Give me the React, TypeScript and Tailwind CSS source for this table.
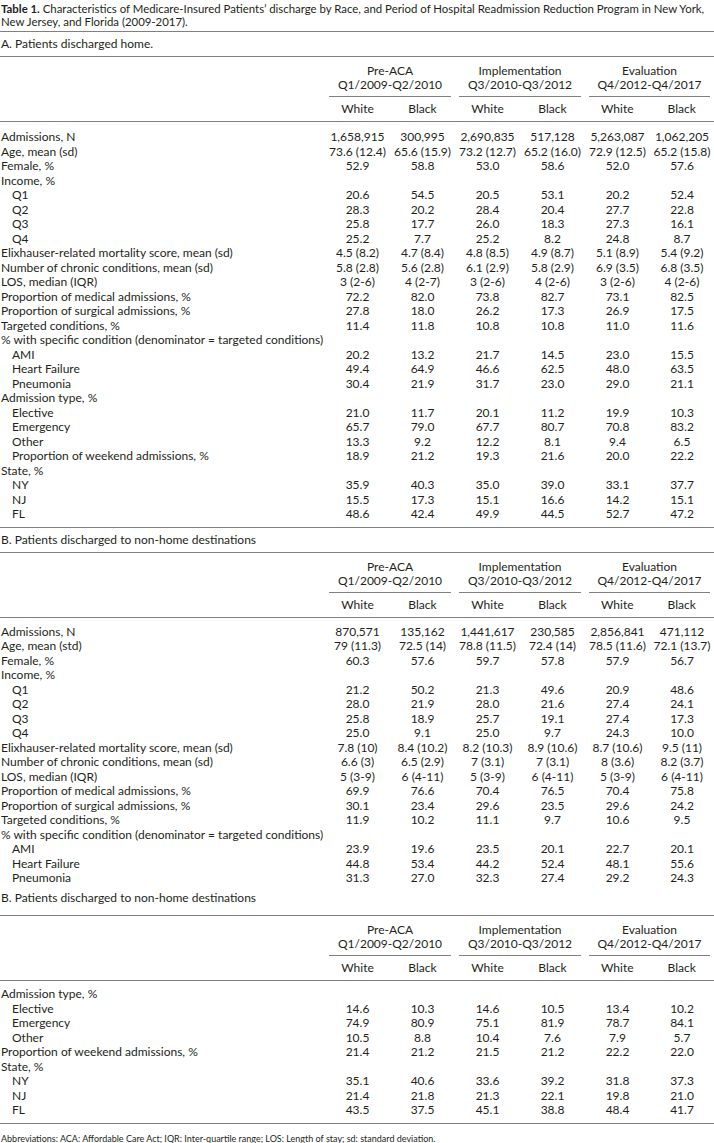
import React from "react";

type Row = { label: string; indent?: boolean; v?: string[] };

const COLS = "grid grid-cols-[325px_65px_65px_65px_65px_65px_64px]";

function Rule() {
  return <div className="h-px bg-[#808080]" />;
}

function Header() {
  const groups = [
    ["Pre-ACA", "Q1/2009-Q2/2010"],
    ["Implementation", "Q3/2010-Q3/2012"],
    ["Evaluation", "Q4/2012-Q4/2017"],
  ];
  return (
    <div className={`${COLS} pt-[7px] pb-[5px]`}>
      <div />
      {groups.map((g) => (
        <div key={g[0]} className="col-span-2 flex flex-col items-center">
          <div className="leading-[14px] text-center whitespace-nowrap">{g[0]}</div>
          <div className="leading-[14px] text-center whitespace-nowrap">{g[1]}</div>
          <div className="mt-[4px] h-px self-stretch mx-[4px] bg-[#808080]" />
          <div className="mt-[5px] self-stretch grid grid-cols-2 leading-[14px] text-center">
            <div>White</div>
            <div>Black</div>
          </div>
        </div>
      ))}
    </div>
  );
}

function Rows({ rows, className }: { rows: Row[]; className: string }) {
  return (
    <div className={className}>
      {rows.map((r, i) => (
        <div key={i} className={`${COLS} h-[14.5px] leading-[14.5px]`}>
          <div className={r.indent ? "pl-[12px] whitespace-nowrap" : "pl-px whitespace-nowrap"}>{r.label}</div>
          {r.v
            ? r.v.map((x, j) => (
                <div key={j} className="text-center whitespace-nowrap">
                  {x}
                </div>
              ))
            : null}
        </div>
      ))}
    </div>
  );
}

const rowsA: Row[] = [
  { label: "Admissions, N", v: ["1,658,915", "300,995", "2,690,835", "517,128", "5,263,087", "1,062,205"] },
  { label: "Age, mean (sd)", v: ["73.6 (12.4)", "65.6 (15.9)", "73.2 (12.7)", "65.2 (16.0)", "72.9 (12.5)", "65.2 (15.8)"] },
  { label: "Female, %", v: ["52.9", "58.8", "53.0", "58.6", "52.0", "57.6"] },
  { label: "Income, %" },
  { label: "Q1", indent: true, v: ["20.6", "54.5", "20.5", "53.1", "20.2", "52.4"] },
  { label: "Q2", indent: true, v: ["28.3", "20.2", "28.4", "20.4", "27.7", "22.8"] },
  { label: "Q3", indent: true, v: ["25.8", "17.7", "26.0", "18.3", "27.3", "16.1"] },
  { label: "Q4", indent: true, v: ["25.2", "7.7", "25.2", "8.2", "24.8", "8.7"] },
  { label: "Elixhauser-related mortality score, mean (sd)", v: ["4.5 (8.2)", "4.7 (8.4)", "4.8 (8.5)", "4.9 (8.7)", "5.1 (8.9)", "5.4 (9.2)"] },
  { label: "Number of chronic conditions, mean (sd)", v: ["5.8 (2.8)", "5.6 (2.8)", "6.1 (2.9)", "5.8 (2.9)", "6.9 (3.5)", "6.8 (3.5)"] },
  { label: "LOS, median (IQR)", v: ["3 (2-6)", "4 (2-7)", "3 (2-6)", "4 (2-6)", "3 (2-6)", "4 (2-6)"] },
  { label: "Proportion of medical admissions, %", v: ["72.2", "82.0", "73.8", "82.7", "73.1", "82.5"] },
  { label: "Proportion of surgical admissions, %", v: ["27.8", "18.0", "26.2", "17.3", "26.9", "17.5"] },
  { label: "Targeted conditions, %", v: ["11.4", "11.8", "10.8", "10.8", "11.0", "11.6"] },
  { label: "% with specific condition (denominator = targeted conditions)" },
  { label: "AMI", indent: true, v: ["20.2", "13.2", "21.7", "14.5", "23.0", "15.5"] },
  { label: "Heart Failure", indent: true, v: ["49.4", "64.9", "46.6", "62.5", "48.0", "63.5"] },
  { label: "Pneumonia", indent: true, v: ["30.4", "21.9", "31.7", "23.0", "29.0", "21.1"] },
  { label: "Admission type, %" },
  { label: "Elective", indent: true, v: ["21.0", "11.7", "20.1", "11.2", "19.9", "10.3"] },
  { label: "Emergency", indent: true, v: ["65.7", "79.0", "67.7", "80.7", "70.8", "83.2"] },
  { label: "Other", indent: true, v: ["13.3", "9.2", "12.2", "8.1", "9.4", "6.5"] },
  { label: "Proportion of weekend admissions, %", indent: true, v: ["18.9", "21.2", "19.3", "21.6", "20.0", "22.2"] },
  { label: "State, %" },
  { label: "NY", indent: true, v: ["35.9", "40.3", "35.0", "39.0", "33.1", "37.7"] },
  { label: "NJ", indent: true, v: ["15.5", "17.3", "15.1", "16.6", "14.2", "15.1"] },
  { label: "FL", indent: true, v: ["48.6", "42.4", "49.9", "44.5", "52.7", "47.2"] },
];

const rowsB: Row[] = [
  { label: "Admissions, N", v: ["870,571", "135,162", "1,441,617", "230,585", "2,856,841", "471,112"] },
  { label: "Age, mean (std)", v: ["79 (11.3)", "72.5 (14)", "78.8 (11.5)", "72.4 (14)", "78.5 (11.6)", "72.1 (13.7)"] },
  { label: "Female, %", v: ["60.3", "57.6", "59.7", "57.8", "57.9", "56.7"] },
  { label: "Income, %" },
  { label: "Q1", indent: true, v: ["21.2", "50.2", "21.3", "49.6", "20.9", "48.6"] },
  { label: "Q2", indent: true, v: ["28.0", "21.9", "28.0", "21.6", "27.4", "24.1"] },
  { label: "Q3", indent: true, v: ["25.8", "18.9", "25.7", "19.1", "27.4", "17.3"] },
  { label: "Q4", indent: true, v: ["25.0", "9.1", "25.0", "9.7", "24.3", "10.0"] },
  { label: "Elixhauser-related mortality score, mean (sd)", v: ["7.8 (10)", "8.4 (10.2)", "8.2 (10.3)", "8.9 (10.6)", "8.7 (10.6)", "9.5 (11)"] },
  { label: "Number of chronic conditions, mean (sd)", v: ["6.6 (3)", "6.5 (2.9)", "7 (3.1)", "7 (3.1)", "8 (3.6)", "8.2 (3.7)"] },
  { label: "LOS, median (IQR)", v: ["5 (3-9)", "6 (4-11)", "5 (3-9)", "6 (4-11)", "5 (3-9)", "6 (4-11)"] },
  { label: "Proportion of medical admissions, %", v: ["69.9", "76.6", "70.4", "76.5", "70.4", "75.8"] },
  { label: "Proportion of surgical admissions, %", v: ["30.1", "23.4", "29.6", "23.5", "29.6", "24.2"] },
  { label: "Targeted conditions, %", v: ["11.9", "10.2", "11.1", "9.7", "10.6", "9.5"] },
  { label: "% with specific condition (denominator = targeted conditions)" },
  { label: "AMI", indent: true, v: ["23.9", "19.6", "23.5", "20.1", "22.7", "20.1"] },
  { label: "Heart Failure", indent: true, v: ["44.8", "53.4", "44.2", "52.4", "48.1", "55.6"] },
  { label: "Pneumonia", indent: true, v: ["31.3", "27.0", "32.3", "27.4", "29.2", "24.3"] },
];

const rowsC: Row[] = [
  { label: "Admission type, %" },
  { label: "Elective", indent: true, v: ["14.6", "10.3", "14.6", "10.5", "13.4", "10.2"] },
  { label: "Emergency", indent: true, v: ["74.9", "80.9", "75.1", "81.9", "78.7", "84.1"] },
  { label: "Other", indent: true, v: ["10.5", "8.8", "10.4", "7.6", "7.9", "5.7"] },
  { label: "Proportion of weekend admissions, %", v: ["21.4", "21.2", "21.5", "21.2", "22.2", "22.0"] },
  { label: "State, %" },
  { label: "NY", indent: true, v: ["35.1", "40.6", "33.6", "39.2", "31.8", "37.3"] },
  { label: "NJ", indent: true, v: ["21.4", "21.8", "21.3", "22.1", "19.8", "21.0"] },
  { label: "FL", indent: true, v: ["43.5", "37.5", "45.1", "38.8", "48.4", "41.7"] },
];

export default function App() {
  return (
    <div className="w-[714px] bg-white text-[#231f20] text-[12px] font-['Lato','Liberation_Sans',sans-serif]">
      <div className="pt-[2px] pb-[3px] pl-px text-[11.4px] leading-[13px] whitespace-nowrap">
        <span className="font-bold">Table 1.</span> Characteristics of Medicare-Insured Patients’ discharge by Race, and Period of Hospital Readmission Reduction Program in New York,
        <br />
        New Jersey, and Florida (2009-2017).
      </div>
      <Rule />
      <div className="h-[24px] leading-[24px] pl-px">A. Patients discharged home.</div>
      <Rule />
      <Header />
      <Rule />
      <Rows rows={rowsA} className="pt-[8px] pb-[5px]" />
      <Rule />
      <div className="h-[24px] leading-[24px] pl-px">B. Patients discharged to non-home destinations</div>
      <Rule />
      <Header />
      <Rule />
      <Rows rows={rowsB} className="pt-[7px] pb-[3px]" />
      <div className="h-[14.5px] leading-[14.5px] pl-px mt-[2px] mb-[10px]">B. Patients discharged to non-home destinations</div>
      <Rule />
      <Header />
      <Rule />
      <Rows rows={rowsC} className="pt-[6px] pb-[5px]" />
      <Rule />
      <div className="pt-[8px] pl-px text-[9px] leading-[13px]">
        Abbreviations: ACA: Affordable Care Act; IQR: Inter-quartile range; LOS: Length of stay; sd: standard deviation.
      </div>
    </div>
  );
}
